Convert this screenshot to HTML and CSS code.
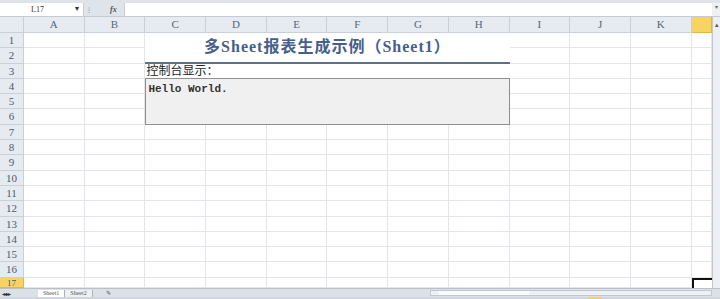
FILE: index.html
```html
<!DOCTYPE html>
<html lang="zh-CN">
<head>
  <meta charset="UTF-8" />
  <title>多Sheet报表生成示例</title>
  <link rel="stylesheet" href="styles.css">
</head>
<body>

  <div class="excel">
    <div class="formula-bar">
      <div class="name-box">L17<span class="dd">▾</span></div>
      <div class="fx-area"><span class="grip">⁝</span><i class="fx">fx</i></div>
      <div class="formula-input"></div>
      <div class="expand">▾</div>
    </div>

    <div class="main">
      <div class="sheet" id="sheet">
        <div class="title">多Sheet报表生成示例（Sheet1）</div>
        <div class="label">控制台显示：</div>
        <div class="console">Hello World.</div>
      </div>
      <div class="vscroll"><span class="up">▴</span></div>
    </div>

    <div class="tabbar">
      <div class="nav">◂◂▸▸</div>
      <div class="tab active">Sheet1</div>
      <div class="tab">Sheet2</div>
      <div class="tab add">✎</div>
      <div class="hscroll"><span class="thumb"></span></div>
    </div>
    <div class="statusbar"><span class="view"></span></div>
  </div>

  <script>
    // build headers + plain cells of the sheet
    const sheet = document.getElementById("sheet");
    const cols = "ABCDEFGHIJKL".split("");
    const ROWS = 17;

    function cell(cls, text, row, col) {
      const div = document.createElement("div");
      div.className = cls;
      div.textContent = text;
      div.style.gridArea = row + " / " + col;
      sheet.insertBefore(div, sheet.firstChild);
    }

    cell("corner", "", 1, 1);
    cols.forEach((c, i) => {
      cell("col-head" + (c === "L" ? " sel" : ""), c === "L" ? "" : c, 1, i + 2);
    });
    for (let r = 1; r <= ROWS; r++) {
      cell("row-head" + (r === ROWS ? " sel" : ""), r, r + 1, 1);
      cols.forEach((c, i) => {
        cell("cell" + (c === "L" && r === ROWS ? " active" : ""), "", r + 1, i + 2);
      });
    }
  </script>

</body>
</html>
```

FILE: styles.css
```css
body {
  margin: 0;
  padding: 0;
  width: 720px;
  height: 299px;
  overflow: hidden;
  background: #fff;
  font-family: "Liberation Serif", "Noto Sans CJK SC", serif;
}

.excel {
  display: flex;
  flex-direction: column;
  width: 720px;
  height: 299px;
}

/* formula bar */
.formula-bar {
  display: flex;
  align-items: stretch;
  height: 17px;
  box-sizing: border-box;
  padding-top: 3px;
  background: #dfe4ea;
  border-bottom: 1px solid #c4cbd4;
  font-size: 8px;
  color: #333;
}

.name-box {
  width: 84px;
  background: #fff;
  box-sizing: border-box;
  padding: 2px 0 0 31px;
  position: relative;
  border-right: 1px solid #c9ced6;
}

.name-box .dd {
  position: absolute;
  right: 4px;
  top: 1px;
  font-size: 8px;
}

.fx-area {
  width: 40px;
  display: flex;
  align-items: center;
  gap: 20px;
  padding-left: 4px;
  box-sizing: border-box;
  color: #888;
}

.fx {
  font-size: 8px;
  color: #555;
  font-weight: bold;
}

.formula-input {
  flex: 1;
  background: #fff;
  border-left: 1px solid #c9ced6;
}

.expand {
  width: 8px;
  background: #eef1f4;
  font-size: 6px;
  color: #666;
  text-align: center;
}

/* sheet area */
.main {
  display: flex;
  height: 271px;
}

.sheet {
  display: grid;
  grid-template-columns: 24px repeat(11, 60.7px) 20px;
  grid-template-rows: 16px repeat(16, 15.3px) 10px;
  width: 712px;
  overflow: hidden;
}

.corner,
.col-head,
.row-head {
  background: #e6ebf1;
  color: #56657a;
  box-sizing: border-box;
  border-right: 1px solid #c9d0d9;
  border-bottom: 1px solid #c9d0d9;
}

.col-head {
  font-size: 11px;
  text-align: center;
  line-height: 15px;
}

.row-head {
  font-size: 11px;
  text-align: center;
  line-height: 15px;
  color: #4e5a6a;
}

.col-head.sel,
.row-head.sel {
  background: #f7d364;
  border-color: #e1b546;
}

.row-head.sel {
  font-size: 9px;
  line-height: 10px;
}

.cell {
  box-sizing: border-box;
  border-right: 1px solid #e2e5ea;
  border-bottom: 1px solid #e2e5ea;
}

.cell.active {
  border-top: 2px solid #111;
  border-left: 2px solid #111;
  border-right: none;
  border-bottom: none;
}

.title {
  grid-area: 2 / 4 / 4 / 10;
  z-index: 1;
  background: #fff;
  border-bottom: 2px solid #5c7190;
  color: #46608a;
  font-size: 16px;
  font-weight: bold;
  letter-spacing: 1px;
  text-align: center;
  line-height: 28px;
}

.label {
  grid-area: 4 / 4 / 5 / 10;
  z-index: 1;
  background: #fff;
  font-size: 12px;
  color: #222;
  line-height: 14px;
  padding-left: 1px;
}

.console {
  grid-area: 5 / 4 / 8 / 10;
  z-index: 1;
  background: #f0f0f0;
  border: 1px solid #8f8f8f;
  margin-top: -1px;
  font-family: "Liberation Mono", monospace;
  font-size: 11px;
  font-weight: bold;
  color: #333;
  padding: 3px 2px;
  line-height: 14px;
}

.vscroll {
  flex: 1;
  background: #eceff3;
  border-left: 1px solid #c2c8d0;
  position: relative;
  font-size: 7px;
  color: #555;
  text-align: center;
}

.vscroll .up {
  display: block;
  margin-top: 4px;
}

/* sheet tabs + scrollbar */
.tabbar {
  display: flex;
  align-items: center;
  height: 8px;
  background: #dce1e7;
  border-top: 1px solid #b9c0ca;
  font-size: 6px;
  color: #555;
}

.nav {
  width: 36px;
  padding-left: 2px;
  letter-spacing: -1px;
  color: #333;
}

.tab {
  padding: 0 5px;
  background: #eef1f4;
  border-right: 1px solid #a9b0bb;
  line-height: 7px;
}

.tab.active {
  background: #fff;
}

.tab.add {
  background: none;
  border: none;
  margin-left: 8px;
}

.hscroll {
  margin-left: auto;
  width: 282px;
  height: 6px;
  margin-right: 8px;
  background: #eef1f4;
  border: 1px solid #c2c8d0;
  box-sizing: border-box;
}

.hscroll .thumb {
  display: block;
  width: 90px;
  height: 100%;
  margin-left: 8px;
  background: #fafbfc;
}

.statusbar {
  flex: 1;
  background: #cfd6df;
  position: relative;
}

.statusbar .view {
  position: absolute;
  left: 588px;
  top: 0;
  width: 14px;
  height: 100%;
  background: #f0d070;
}
```
